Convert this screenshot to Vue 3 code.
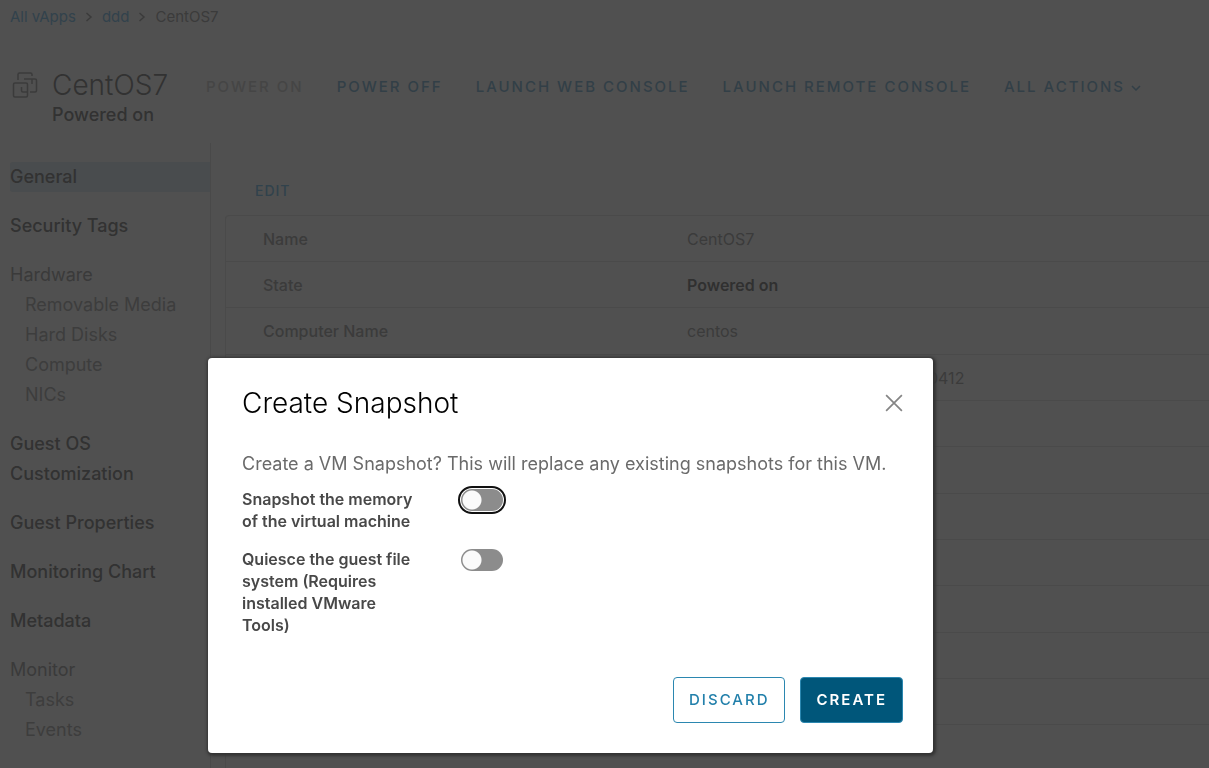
<script setup>
import { ref } from 'vue'

const actions = [
  { label: 'POWER ON', disabled: true },
  { label: 'POWER OFF' },
  { label: 'LAUNCH WEB CONSOLE' },
  { label: 'LAUNCH REMOTE CONSOLE' },
]

const nav = [
  { label: 'General', active: true },
  { label: 'Security Tags' },
  { label: 'Hardware', heading: true, children: ['Removable Media', 'Hard Disks', 'Compute', 'NICs'] },
  { label: 'Guest OS Customization' },
  { label: 'Guest Properties' },
  { label: 'Monitoring Chart' },
  { label: 'Metadata' },
  { label: 'Monitor', heading: true, children: ['Tasks', 'Events'] },
]

const rows = [
  { name: 'Name', value: 'CentOS7' },
  { name: 'State', value: 'Powered on', strong: true },
  { name: 'Computer Name', value: 'centos' },
  { name: '', value: '0412', trailing: true },
  ...Array.from({ length: 8 }, () => ({ name: '', value: '' })),
]

const memory = ref(false)
const quiesce = ref(false)
</script>

<template>
  <div class="page">
    <nav class="crumbs" aria-label="Breadcrumb">
      <a href="#">All vApps</a>
      <svg class="sep" viewBox="0 0 8 10"><path d="M1.5 1 6 5 1.5 9" /></svg>
      <a href="#">ddd</a>
      <svg class="sep" viewBox="0 0 8 10"><path d="M1.5 1 6 5 1.5 9" /></svg>
      <span>CentOS7</span>
    </nav>

    <header class="head">
      <svg class="vm" viewBox="0 0 26 26">
        <path d="M6 8V2.500a1.500 1.500 0 0 1 1.500-1.500H18.500a1.500 1.500 0 0 1 1.500 1.500V4" />
        <path d="M12 7H23a1.500 1.500 0 0 1 1.500 1.500V18.500a1.500 1.500 0 0 1-1.500 1.500H18" />
        <path d="M20 7V12M15.500 20H11a1.500 1.500 0 0 1-1.500-1.500V15" />
        <rect x="1.500" y="11" width="14" height="14" rx="1.500" />
      </svg>
      <div class="ident">
        <h1>CentOS7</h1>
        <p>Powered on</p>
      </div>
      <div class="actions">
        <button v-for="a in actions" :key="a.label" type="button" :disabled="a.disabled">{{ a.label }}</button>
        <button type="button">
          ALL ACTIONS
          <svg class="caret" viewBox="0 0 10 6"><path d="M1 1 5 5 9 1" /></svg>
        </button>
      </div>
    </header>

    <div class="main">
      <nav class="side" aria-label="Virtual machine">
        <div v-for="item in nav" :key="item.label" class="group">
          <span v-if="item.heading" class="heading">{{ item.label }}</span>
          <a v-else href="#" class="item" :class="{ active: item.active }">{{ item.label }}</a>
          <a v-for="c in item.children" :key="c" href="#" class="child">{{ c }}</a>
        </div>
      </nav>

      <section class="detail">
        <button type="button" class="edit">EDIT</button>
        <table>
          <tbody>
            <tr v-for="(r, i) in rows" :key="i">
              <th scope="row">{{ r.name }}</th>
              <td :class="{ strong: r.strong, trailing: r.trailing }">{{ r.value }}</td>
            </tr>
          </tbody>
        </table>
      </section>
    </div>

    <div class="overlay">
      <div class="dialog" role="dialog" aria-modal="true" aria-labelledby="dlg-title">
        <div class="dlg-head">
          <h2 id="dlg-title">Create Snapshot</h2>
          <button type="button" class="close" aria-label="Close">
            <svg viewBox="0 0 16 16"><path d="M1 1 15 15M15 1 1 15" /></svg>
          </button>
        </div>
        <p class="intro">Create a VM Snapshot? This will replace any existing snapshots for this VM.</p>
        <div class="field">
          <label for="memory">Snapshot the memory of the virtual machine</label>
          <input id="memory" v-model="memory" type="checkbox" role="switch" class="focused" />
        </div>
        <div class="field">
          <label for="quiesce">Quiesce the guest file system (Requires installed VMware Tools)</label>
          <input id="quiesce" v-model="quiesce" type="checkbox" role="switch" />
        </div>
        <div class="dlg-foot">
          <button type="button" class="btn">DISCARD</button>
          <button type="button" class="btn primary">CREATE</button>
        </div>
      </div>
    </div>
  </div>
</template>

<style>
body {
  background: #505050;
}
</style>

<style scoped>
.page {
  height: 100vh;
  overflow: hidden;
  background: #505050;
  color: #3b3b3b;
  font-family: Inter, "Noto Sans", sans-serif;
  font-size: 16px;
  display: flex;
  flex-direction: column;
}
h1, h2, p {
  margin: 0;
  font-weight: 400;
}
a {
  color: inherit;
  text-decoration: none;
}
button {
  font: inherit;
  color: inherit;
  letter-spacing: inherit;
  background: none;
  border: 0;
  padding: 0;
}
svg {
  fill: none;
  stroke: currentColor;
  flex: none;
}
.crumbs {
  display: flex;
  align-items: center;
  gap: 9px;
  padding: 7px 10px;
  font-size: 15px;
  line-height: 20px;
}
.crumbs a {
  color: #32424c;
}
.sep {
  width: 8px;
  height: 10px;
  stroke-width: 1.5;
}
.head {
  display: flex;
  align-items: flex-start;
  padding: 33px 12px 0;
  height: 76px;
}
.vm {
  width: 26px;
  height: 26px;
  margin-top: 5px;
  stroke-width: 1.5;
}
.ident {
  margin-left: 14px;
  width: 154px;
  color: #323232;
}
h1 {
  font-size: 28px;
  font-weight: 300;
  line-height: 36px;
}
.ident p {
  font-size: 18px;
  font-weight: 500;
  line-height: 24px;
}
.actions {
  display: flex;
  gap: 33px;
  padding-top: 10px;
  font-size: 15px;
  font-weight: 500;
  line-height: 20px;
  letter-spacing: 2px;
  color: #323f47;
  white-space: nowrap;
}
.actions button:disabled {
  color: #454545;
}
.caret {
  width: 10px;
  height: 6px;
  stroke-width: 1.5;
  vertical-align: 1px;
}
.main {
  display: flex;
  flex: 1;
  min-height: 0;
}
.side {
  width: 200px;
  flex: none;
  padding: 19px 0 0 10px;
  border-right: 1px solid #494949;
  display: flex;
  flex-direction: column;
  gap: 19px;
  font-size: 18px;
  line-height: 30px;
}
.group {
  display: flex;
  flex-direction: column;
}
.item {
  color: #323232;
  font-weight: 500;
}
.heading {
  color: #3a3a3a;
}
.active {
  background: #494c4e;
  border-radius: 3px 0 0 3px;
}
.child {
  padding-left: 15px;
  color: #3d3d3d;
}
.detail {
  flex: 1;
  padding: 38px 0 0 14px;
}
.edit {
  display: block;
  margin: 0 0 14px 30px;
  font-size: 14px;
  font-weight: 500;
  line-height: 20px;
  letter-spacing: 1px;
  color: #31424c;
}
table {
  width: 100%;
  border-spacing: 0;
  table-layout: fixed;
  border-left: 1px solid #4a4a4a;
  border-radius: 4px 0 0 0;
}
tr {
  height: 46px;
}
tr:nth-child(3n) {
  height: 47px;
}
th, td {
  padding: 0 0 0 37px;
  border-top: 1px solid #4a4a4a;
  text-align: left;
  font-weight: 400;
}
th {
  width: 424px;
  font-weight: 500;
  box-sizing: border-box;
}
tr:first-child th {
  border-top-left-radius: 4px;
}
.strong {
  color: #303030;
  font-weight: 600;
}
.trailing {
  padding-left: 278px;
}
.overlay {
  position: fixed;
  inset: 0;
  display: flex;
  justify-content: center;
  align-items: flex-end;
  padding: 0 68px 15px 0;
}
.dialog {
  width: 725px;
  max-width: 100%;
  box-sizing: border-box;
  padding: 27px 30px 30px 34px;
  border-radius: 4px;
  background: #fff;
  color: #6a6a6a;
  box-shadow: 1px 1px 3px 2px #333;
}
.dlg-head {
  display: flex;
  justify-content: space-between;
  align-items: center;
}
h2 {
  font-size: 28px;
  font-weight: 300;
  line-height: 36px;
  color: #000;
}
.close {
  display: flex;
  color: #858585;
}
.close svg {
  width: 18px;
  height: 18px;
  stroke-width: 1.5;
}
.intro {
  margin: 31px 0 12px;
  font-size: 18px;
  line-height: 24px;
}
.field {
  display: flex;
  align-items: flex-start;
  gap: 35px;
  margin-bottom: 16px;
}
.field label {
  width: 184px;
  font-weight: 600;
  line-height: 22px;
  color: #484848;
}
.field input {
  appearance: none;
  width: 42px;
  height: 22px;
  margin: 1px 0 0;
  border-radius: 11px;
  background: radial-gradient(circle at 11px 11px, #fafafa 9px, #8c8c8c 10px);
}
.focused {
  outline: 2px solid #111;
  outline-offset: 1px;
}
.dlg-foot {
  display: flex;
  justify-content: flex-end;
  gap: 15px;
  margin-top: 41px;
}
.btn {
  padding: 11px 15px;
  border: 1px solid #2b87b0;
  border-radius: 4px;
  font-size: 15px;
  font-weight: 500;
  line-height: 22px;
  letter-spacing: 2px;
  color: #2380ab;
}
.primary {
  background: #00567a;
  color: #fff;
  font-weight: 600;
}
</style>
